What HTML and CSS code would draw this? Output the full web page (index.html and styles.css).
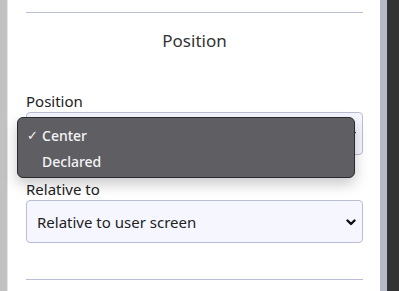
FILE: index.html
```html
<!DOCTYPE html>
<html>
<head>
  <title>Position settings</title>
  <link rel="stylesheet" href="styles.css">
</head>
<body>
  <div class="frame">
    <div class="edge-left"></div>

    <div class="panel">
      <hr class="rule">
      <h2 class="title">Position</h2>

      <!-- position picker, opened -->
      <div class="field">
        <label class="label">Position</label>
        <div class="select-wrap">
          <select class="select">
            <option>Center</option>
            <option>Declared</option>
          </select>
          <svg class="chevron" width="10" height="7" viewBox="0 0 10 7">
            <path d="M1.5 1.5 L5 5 L8.5 1.5" fill="none" stroke="#111" stroke-width="2.4" stroke-linecap="round" stroke-linejoin="round"/>
          </svg>
          <ul class="menu">
            <li class="item checked"><span class="tick">✓</span>Center</li>
            <li class="item"><span class="tick"></span>Declared</li>
          </ul>
        </div>
      </div>

      <div class="field">
        <label class="label">Relative to</label>
        <div class="select-wrap">
          <select class="select">
            <option>Relative to user screen</option>
          </select>
          <svg class="chevron" width="10" height="7" viewBox="0 0 10 7">
            <path d="M1.5 1.5 L5 5 L8.5 1.5" fill="none" stroke="#111" stroke-width="2.4" stroke-linecap="round" stroke-linejoin="round"/>
          </svg>
        </div>
      </div>

      <hr class="rule bottom">
    </div>

    <div class="edge-right"></div>
    <div class="edge-dark"></div>
  </div>
</body>
</html>
```

FILE: styles.css
```css
body {
  margin: 0;
  background-color: #fff;
  font-family: "Noto Sans", "Open Sans", sans-serif;
  color: #222;
  overflow: hidden;
}

.frame {
  display: flex;
  height: 291px;
}

.edge-left {
  width: 7px;
  background-color: #c2c2c2;
  border-right: 1px solid #e4e4e4;
  margin-right: 2px;
}

.panel {
  flex: 1;
  padding: 0 17px 0 16px;
}

.edge-right {
  width: 7px;
  background-color: #b5bacb;
}

.edge-dark {
  width: 12px;
  background-color: #333;
}

/* rules */
.rule {
  border: 0;
  border-top: 1px solid #b9bed3;
  margin: 12px 0 0;
}

.rule.bottom {
  margin-top: 36px;
}

.title {
  font-size: 17px;
  font-weight: 400;
  text-align: center;
  color: #333;
  margin: 16px 0 0;
  line-height: 24px;
}

/* fields */
.field:first-of-type {
  margin-top: 38px;
}

.field + .field {
  margin-top: 24px;
}

.label {
  display: block;
  font-size: 15px;
  line-height: 20px;
  color: #222;
  margin-bottom: 1px;
}

.select-wrap {
  position: relative;
}

.select {
  appearance: none;
  -webkit-appearance: none;
  width: 100%;
  height: 43px;
  box-sizing: border-box;
  background-color: #f5f6ff;
  border: 1px solid #b9bed3;
  border-radius: 4px;
  padding: 0 10px;
  font-family: inherit;
  font-size: 15px;
  color: #222;
}

.chevron {
  position: absolute;
  right: 7px;
  top: 19px;
}

/* open dropdown */
.menu {
  position: absolute;
  left: -9px;
  top: 5px;
  width: 338px;
  box-sizing: border-box;
  margin: 0;
  padding: 4px 0 3px;
  list-style: none;
  background-color: #5f5e63;
  border: 1px solid #2a2a2c;
  border-radius: 6px;
  box-shadow: 0 6px 14px rgba(0, 0, 0, 0.22);
  z-index: 2;
}

.item {
  display: flex;
  align-items: center;
  height: 26px;
  padding-left: 9px;
  font-size: 14px;
  font-weight: 500;
  color: #f4f4f6;
}

.tick {
  width: 15px;
  font-size: 13px;
}
```
